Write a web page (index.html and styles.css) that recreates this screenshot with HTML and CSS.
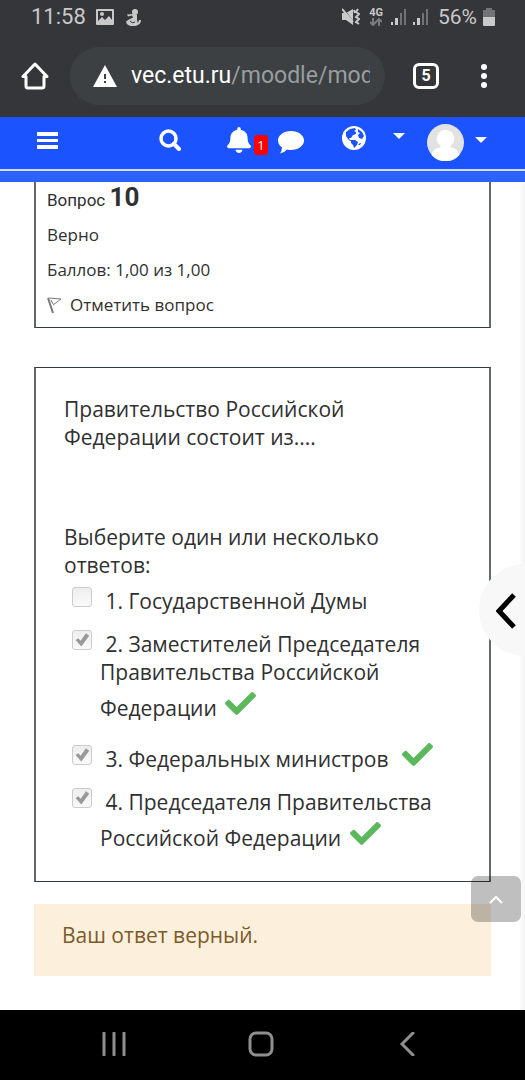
FILE: index.html
```html
<!DOCTYPE html>
<html lang="ru">

<head>
  <meta charset="UTF-8">
  <meta name="viewport" content="width=device-width, initial-scale=1.0">
  <title>Вопрос 10</title>
  <link rel="stylesheet" href="styles.css">
</head>

<body>
  <div class="status">
    <span class="time">11:58</span>
    <svg class="pic" width="18" height="16" viewBox="0 0 18 16"><path fill="#c9c9c9" fill-rule="evenodd" d="M1 0h16q1 0 1 1v14q0 1-1 1H1q-1 0-1-1V1q0-1 1-1zM2 2v10l4-4 3 3 4-4 3 4V2z"/><circle cx="6" cy="5" r="2" fill="#c9c9c9"/></svg>
    <svg width="15" height="17" viewBox="0 0 15 17"><g fill="#c9c9c9"><circle cx="9" cy="3" r="3"/><path d="M7 5l4 1 0 5q1 2 0 3 2-1 2-3l2 0q0 4-4 5.500-4 1-8 0Q0 15 0 12.500l3-2 4-2-1-2-4 1-1-2z"/></g><path d="M4 12q2 3 5 1" fill="none" stroke="#35363a"/></svg>
    <div class="status-right">
      <svg class="mute" width="18" height="18" viewBox="0 0 18 18"><path fill="#c9c9c9" d="M0 5h4l7-4v16l-7-5H0z"/><path d="M1 0l12 16" stroke="#35363a" stroke-width="1"/><path d="M0 1l11 13M16 1l-2 3 3 2-3 3 3 2-3 3 3 2M12 2l1 3" fill="none" stroke="#c9c9c9" stroke-width="2"/></svg>
      <div class="net">4G
        <svg width="12" height="8" viewBox="0 0 12 8"><path d="M3 0v7M0 4l3 3 3-3M9 8V1M6 4l3-3 3 3" fill="none" stroke="#7b7c7f" stroke-width="2"/></svg>
      </div>
      <svg class="signal" width="16" height="16" viewBox="0 0 16 16"><path fill="#c9c9c9" d="M0 13h2v3H0zM4 9h3v7H4z"/><path fill="#727376" d="M9 4h2v12H9zM13 0h2v16h-2z"/></svg>
      <svg class="signal" width="16" height="16" viewBox="0 0 16 16"><path fill="#c9c9c9" d="M0 13h2v3H0zM4 9h3v7H4z"/><path fill="#727376" d="M9 4h2v12H9zM13 0h2v16h-2z"/></svg>
      <span class="percent">56%</span>
      <svg width="12" height="18" viewBox="0 0 12 18"><path fill="#727376" d="M3 0h6v2h3v7H0V2h3z"/><path fill="#c9c9c9" d="M0 9h12v8q0 1-1 1H1q-1 0-1-1z"/></svg>
    </div>
  </div>

  <div class="browser">
    <button class="plain" aria-label="Домой"><svg width="28" height="28" viewBox="0 0 28 28"><path d="M14 2L2 14.500H5V24q0 2 2 2h14q2 0 2-2V14.500h3z" fill="none" stroke="#fff" stroke-width="3" stroke-linejoin="round"/></svg></button>
    <div class="address">
      <svg width="24" height="22" viewBox="0 0 24 22"><path fill="#fff" d="M12 0l12 22H0z"/><path fill="#3c4043" d="M11 9h2v5h-2zM11 16h2v2h-2z"/></svg>
      <label for="url">vec.etu.ru</label>
      <input id="url" type="text" value="/moodle/mod/quiz">
    </div>
    <button class="tabs">5</button>
    <button class="plain" aria-label="Меню"><svg width="8" height="26" viewBox="0 0 8 26"><g fill="#fff"><circle cx="4" cy="4" r="3"/><circle cx="4" cy="13" r="3"/><circle cx="4" cy="22" r="3"/></g></svg></button>
  </div>

  <nav class="navbar">
    <div class="navbar-inner">
      <button class="plain bars" aria-label="Навигация"><svg width="21" height="17" viewBox="0 0 21 17"><path fill="#fff" d="M0 0h21v4H0zM0 7h21v3H0zM0 13h21v4H0z"/></svg></button>
      <button class="plain search" aria-label="Поиск"><svg width="22" height="22" viewBox="0 0 22 22"><circle cx="9.500" cy="9.500" r="7.500" fill="none" stroke="#fff" stroke-width="3.500"/><path d="M15 15l5 5" stroke="#fff" stroke-width="4" stroke-linecap="round"/></svg></button>
      <button class="plain bell" aria-label="Уведомления"><svg width="24" height="26" viewBox="0 0 448 512" preserveAspectRatio="none"><path fill="#fff" d="M224 512c35.320 0 63.970-28.650 63.970-64H160.030c0 35.350 28.650 64 63.970 64zm215.390-149.710c-19.320-20.760-55.470-51.990-55.470-154.290 0-77.700-54.480-139.900-127.940-155.160V32c0-17.670-14.320-32-31.980-32s-31.980 14.330-31.980 32v20.840C118.560 68.100 64.080 130.300 64.080 208c0 102.300-36.150 133.530-55.470 154.290-6 6.450-8.660 14.160-8.610 21.710.11 16.400 12.980 32 32.100 32h383.800c19.120 0 32-15.600 32.100-32 .05-7.550-2.610-15.270-8.610-21.710z"/></svg></button>
      <span class="badge">1</span>
      <button class="plain chat" aria-label="Сообщения"><svg width="26" height="23" viewBox="0 0 26 23"><path fill="#fff" d="M13 0c7.200 0 13 4.200 13 9.500S20.200 19 13 19q-2 0-4-.5Q6 22 2 22.500q2-3 2-6-4-3-4-7C0 4.200 5.800 0 13 0z"/></svg></button>
      <button class="plain globe" aria-label="Язык"><svg width="24" height="24" viewBox="0 0 24 24"><circle cx="12" cy="12" r="12" fill="#fff"/><path fill="#1a53ff" d="M4 6l4-3 5-1 1 2-2 1 2 1 0 2-3 1-2 3-2 0 1 2 3 1 0 1-3-1-2-2-2-3zM16 3l4 3 2 4-2 3-3-1-1-3 2-2-2-1zM9 14l4 0 3 2-1 3-3 3-1-3-2-2zM16 19l2-2 1 0-1 2z"/></svg></button>
      <svg class="lang-caret" width="12" height="6" viewBox="0 0 12 6"><path fill="#fff" d="M0 0h12L6 6z"/></svg>
      <button class="plain avatar" aria-label="Профиль"><svg width="37" height="37" viewBox="0 0 37 37"><circle cx="18.500" cy="18.500" r="18.500" fill="#e2e2e2"/><path fill="#fff" d="M18.500 6a8.500 8.500 0 0 1 5 15.500v2q8 1 9 7.500a18.500 18.500 0 0 1-28 0q1-6.500 9-7.500v-2a8.500 8.500 0 0 1 5-15.500z"/></svg></button>
      <svg width="12" height="6" viewBox="0 0 12 6"><path fill="#fff" d="M0 0h12L6 6z"/></svg>
    </div>
  </nav>

  <main class="page">
    <section class="info">
      <h3>Вопрос <b>10</b></h3>
      <p>Верно</p>
      <p>Баллов: 1,00 из 1,00</p>
      <a class="flag" href="#">
        <svg width="15" height="17" viewBox="0 0 15 17"><path d="M1 1l5 15" fill="none" stroke="#777" stroke-width="2"/><path d="M2 1l12 1-8 6M4 3l2 4" fill="none" stroke="#777"/></svg>
        Отметить вопрос
      </a>
    </section>

    <section class="question">
      <p class="text">Правительство Российской Федерации состоит из....</p>
      <p>Выберите один или несколько ответов:</p>
      <ul>
        <li>
          <input type="checkbox" id="a1" disabled>
          <label for="a1">1. Государственной Думы</label>
        </li>
        <li>
          <input type="checkbox" id="a2" checked disabled>
          <label for="a2">2. Заместителей Председателя Правительства Российской Федерации <svg class="ok" viewBox="0 0 512 512"><use href="#check"/></svg></label>
        </li>
        <li>
          <input type="checkbox" id="a3" checked disabled>
          <label for="a3">3. Федеральных министров&nbsp; <svg class="ok" viewBox="0 0 512 512"><use href="#check"/></svg></label>
        </li>
        <li>
          <input type="checkbox" id="a4" checked disabled>
          <label for="a4">4. Председателя Правительства Российской Федерации <svg class="ok" viewBox="0 0 512 512"><use href="#check"/></svg></label>
        </li>
      </ul>
    </section>

    <div class="feedback">Ваш ответ верный.</div>

    <button class="drawer" aria-label="Открыть панель"><svg width="20" height="36" viewBox="0 0 20 36"><path d="M18 2L3 18l15 16" fill="none" stroke="#000" stroke-width="5"/></svg></button>
    <button class="to-top" aria-label="Наверх"><svg width="14" height="9" viewBox="0 0 14 9"><path d="M1 8l6-6 6 6" fill="none" stroke="#fff" stroke-width="2"/></svg></button>
  </main>

  <div class="system">
    <button class="plain" aria-label="Недавние"><svg width="24" height="24" viewBox="0 0 24 24"><path d="M2 1v22M12 1v22M22 1v22" stroke="#8f8f8f" stroke-width="3" stroke-linecap="round"/></svg></button>
    <button class="plain" aria-label="Главный экран"><svg width="26" height="26" viewBox="0 0 26 26"><rect x="2" y="2" width="22" height="22" rx="6" fill="none" stroke="#8f8f8f" stroke-width="3"/></svg></button>
    <button class="plain" aria-label="Назад"><svg width="24" height="24" viewBox="0 0 24 24"><path d="M17 1L6 12l11 11" fill="none" stroke="#8f8f8f" stroke-width="3" stroke-linecap="round"/></svg></button>
  </div>

  <svg class="defs" width="0" height="0">
    <path id="check" d="M173.898 439.404l-166.400-166.400c-9.997-9.997-9.997-26.206 0-36.204l36.203-36.204c9.997-9.998 26.207-9.998 36.204 0L192 312.690 432.095 72.596c9.997-9.997 26.207-9.997 36.204 0l36.203 36.204c9.997 9.997 9.997 26.206 0 36.204l-294.400 294.401c-9.998 9.997-26.207 9.997-36.204-.001z"/>
  </svg>
</body>

</html>
```

FILE: styles.css
```css
* {
  margin: 0;
  padding: 0;
  box-sizing: border-box;
}

body {
  display: flex;
  flex-direction: column;
  min-height: 100vh;
  background-color: #fff;
  color: #303030;
  font: 21px/28px "Open Sans", "Noto Sans", sans-serif;
}

ul {
  list-style: none;
}

svg {
  flex: none;
}

button {
  cursor: pointer;
  border: none;
}

.plain {
  display: flex;
  flex: none;
  background: none;
}

.defs {
  position: absolute;
}

/* status bar */
.status {
  display: flex;
  align-items: center;
  height: 36px;
  padding: 0 30px 2px 31px;
  background-color: #35363a;
  color: #c9c9c9;
  font-family: Roboto, sans-serif;
  font-size: 22px;
}

.pic {
  margin: 0 12px 0 10px;
}

.status-right {
  display: flex;
  align-items: center;
  margin-left: auto;
}

.net {
  display: flex;
  flex-direction: column;
  align-items: center;
  margin: 0 8px 0 9px;
  font-size: 11px;
  font-weight: bold;
  line-height: 10px;
}

.signal {
  margin-right: 6px;
}

.percent {
  margin: 0 6px 0 3px;
  font-size: 21px;
}

/* browser bar */
.browser {
  display: flex;
  align-items: center;
  height: 81px;
  padding: 0 37px 2px 21px;
  background-color: #35363a;
  font-family: Roboto, sans-serif;
}

.address {
  display: flex;
  align-items: center;
  flex: 1;
  min-width: 0;
  height: 58px;
  margin: 0 28px 0 21px;
  padding: 0 15px 0 23px;
  border-radius: 29px;
  background-color: #3c4043;
  color: #fff;
  font-size: 23px;
}

.address label {
  margin-left: 14px;
}

.address input {
  flex: 1;
  min-width: 0;
  border: none;
  outline: none;
  background: none;
  color: #9a9da0;
  font: inherit;
}

.tabs {
  width: 26px;
  height: 26px;
  margin-right: 41px;
  border: 3px solid #fff;
  border-radius: 6px;
  background: none;
  color: #fff;
  font: bold 16px/20px Roboto, sans-serif;
}

/* site header */
.navbar {
  border-bottom: 11px solid #2b62fb;
  background-color: #1a53ff;
}

.navbar-inner {
  display: flex;
  align-items: center;
  height: 54px;
  padding: 0 38px 6px 37px;
  border-bottom: 2px solid #d3e0fb;
}

.search {
  margin-left: auto;
}

.bell {
  margin-left: 46px;
}

.badge {
  width: 14px;
  margin: 10px 10px 0 3px;
  border-radius: 3px;
  background-color: #f00;
  color: #fff;
  font-size: 13px;
  line-height: 20px;
  text-align: center;
}

.chat {
  margin-top: 4px;
}

.globe {
  margin: 0 27px 4px 38px;
}

.lang-caret {
  margin-bottom: 8px;
}

.avatar {
  margin: 4px 11px 0 22px;
}

/* page */
.page {
  flex: 1;
  position: relative;
  overflow: hidden;
  padding: 0 34px;
  background: linear-gradient(to left, #f3f3f3, #fff 6px);
}

.info,
.question {
  border: solid #33393c;
  border-width: 1px 2px;
  border-left-color: #62686b;
  border-right-color: #62686b;
}

.info {
  display: flex;
  flex-direction: column;
  gap: 7px;
  padding: 1px 11px 8px;
  border-top: none;
  font-size: 17px;
}

.info h3 {
  font: 17px/28px Roboto, sans-serif;
}

.info b {
  font-size: 26px;
}

.flag {
  display: flex;
  align-items: center;
  gap: 8px;
  color: inherit;
  text-decoration: none;
}

.question {
  margin-top: 39px;
  padding: 27px 28px 22px;
}

.question .text {
  margin-bottom: 72px;
}

.question li {
  padding: 8px 0 7px 36px;
}

.question input {
  appearance: none;
  width: 20px;
  height: 20px;
  margin: 0 8px 0 -28px;
  border: 1px solid #ccc;
  border-radius: 3px;
  background: linear-gradient(#eee, #fafafa);
  vertical-align: 2px;
}

.question input:checked::before {
  content: "";
  display: block;
  height: 18px;
  background-color: #999;
  clip-path: polygon(14% 50%, 30% 40%, 42% 54%, 72% 12%, 90% 26%, 46% 86%);
}

.ok {
  width: 31px;
  height: 35px;
  margin-left: 3px;
  vertical-align: -5px;
  fill: #5cb85c;
}

.feedback {
  margin-top: 22px;
  padding: 17px 28px 27px;
  background-color: #fcefdc;
  color: #7d5a29;
}

.drawer {
  position: absolute;
  top: 382px;
  right: -46px;
  width: 92px;
  height: 92px;
  padding: 4px 0 0 17px;
  border-radius: 50%;
  background-color: #f8f8f8;
  text-align: left;
}

.to-top {
  position: absolute;
  right: 4px;
  bottom: 88px;
  width: 50px;
  height: 46px;
  border-radius: 7px;
  background-color: rgba(0, 0, 0, .25);
}

/* system buttons */
.system {
  display: flex;
  align-items: center;
  justify-content: space-between;
  height: 70px;
  padding: 0 105px 2px 102px;
  background-color: #000;
}
```
